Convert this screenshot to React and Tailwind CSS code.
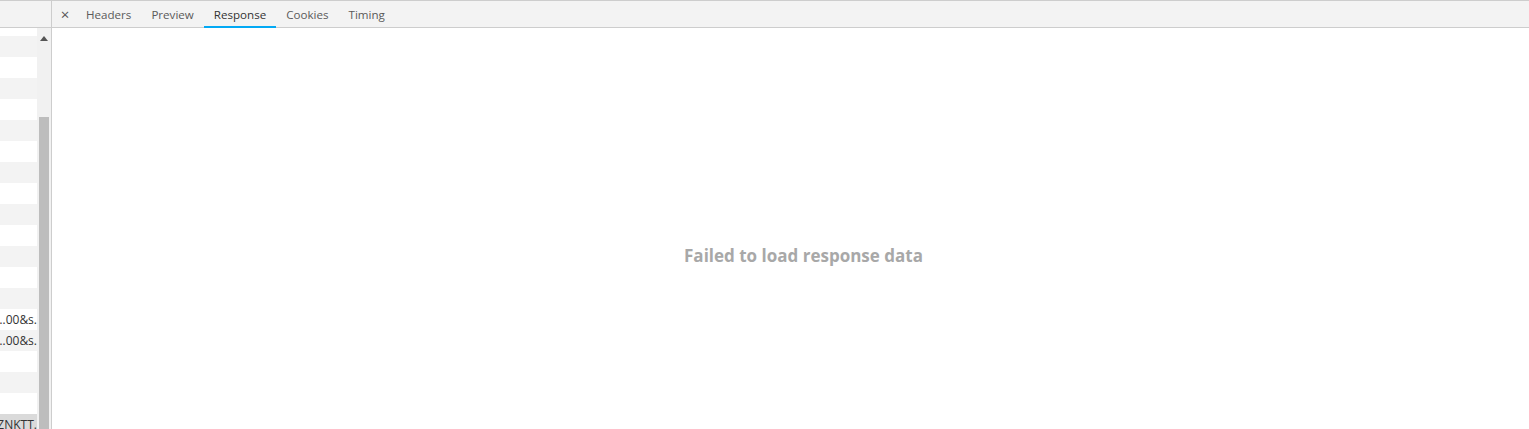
import React from 'react';

const rows = Array.from({ length: 19 }, (_, i) => i);
const tabs = ['Headers', 'Preview', 'Response', 'Cookies', 'Timing'];

const RequestList = () => (
  <div className="w-[52px] shrink-0 flex flex-col border-r border-[#cdcdcd] bg-white">
    <div className="h-[28px] shrink-0 border-t border-b border-[#cdcdcd] bg-[#f3f3f3]" />
    <div className="flex flex-1 min-h-0 overflow-hidden">
      <div className="w-[37px] shrink-0 flex flex-col overflow-hidden">
        {/* first row is scrolled partly out of view */}
        <div className="h-[8px] shrink-0 bg-white" />
        {rows.map((i) => {
          const label = i === 13 || i === 14 ? 'https://x…00&s.' : i === 18 ? 'aZNKTT.' : '';
          const bg = i === 18 ? 'bg-[#dadada]' : i % 2 === 0 ? 'bg-[#f3f3f3]' : 'bg-white';
          return (
            <div key={i} className={`h-[21px] shrink-0 flex items-center justify-end overflow-hidden whitespace-nowrap text-[12px] text-[#333] ${bg}`}>
              {label}
            </div>
          );
        })}
      </div>
      <div className="w-[14px] shrink-0 flex flex-col bg-[#f1f1f1]">
        <div className="h-[18px] shrink-0 flex items-center justify-center pt-[2px]">
          <svg width="8" height="5" viewBox="0 0 8 5"><path d="M4 0 L8 5 L0 5 Z" fill="#555" /></svg>
        </div>
        <div className="h-[71px] shrink-0" />
        <div className="flex-1 mx-[2px] bg-[#bdbdbd]" />
      </div>
    </div>
  </div>
);

const App = () => (
  <div className="w-full h-[429px] flex bg-white overflow-hidden" style={{ fontFamily: '"Open Sans", "Noto Sans", sans-serif' }}>
    <RequestList />
    <div className="flex-1 flex flex-col min-w-0">
      <div className="h-[28px] shrink-0 flex items-stretch border-t border-b border-[#cdcdcd] bg-[#f3f3f3] text-[11.6px] text-[#5a5a5a]">
        <div className="w-[24px] flex items-center justify-center text-[15px] text-[#555] pl-[2px]">×</div>
        {tabs.map((t) => (
          <div
            key={t}
            className={`px-[10px] pt-[2px] flex items-center border-b-2 -mb-px ${t === 'Response' ? 'border-[#03a9f4] text-[#333]' : 'border-transparent'}`}
          >
            {t}
          </div>
        ))}
      </div>
      <div className="flex-1 flex justify-center pt-[215px] pl-[26px]">
        <div className="text-[17px] font-bold text-[#a8a8a8] h-fit">Failed to load response data</div>
      </div>
    </div>
  </div>
);

export default App;
